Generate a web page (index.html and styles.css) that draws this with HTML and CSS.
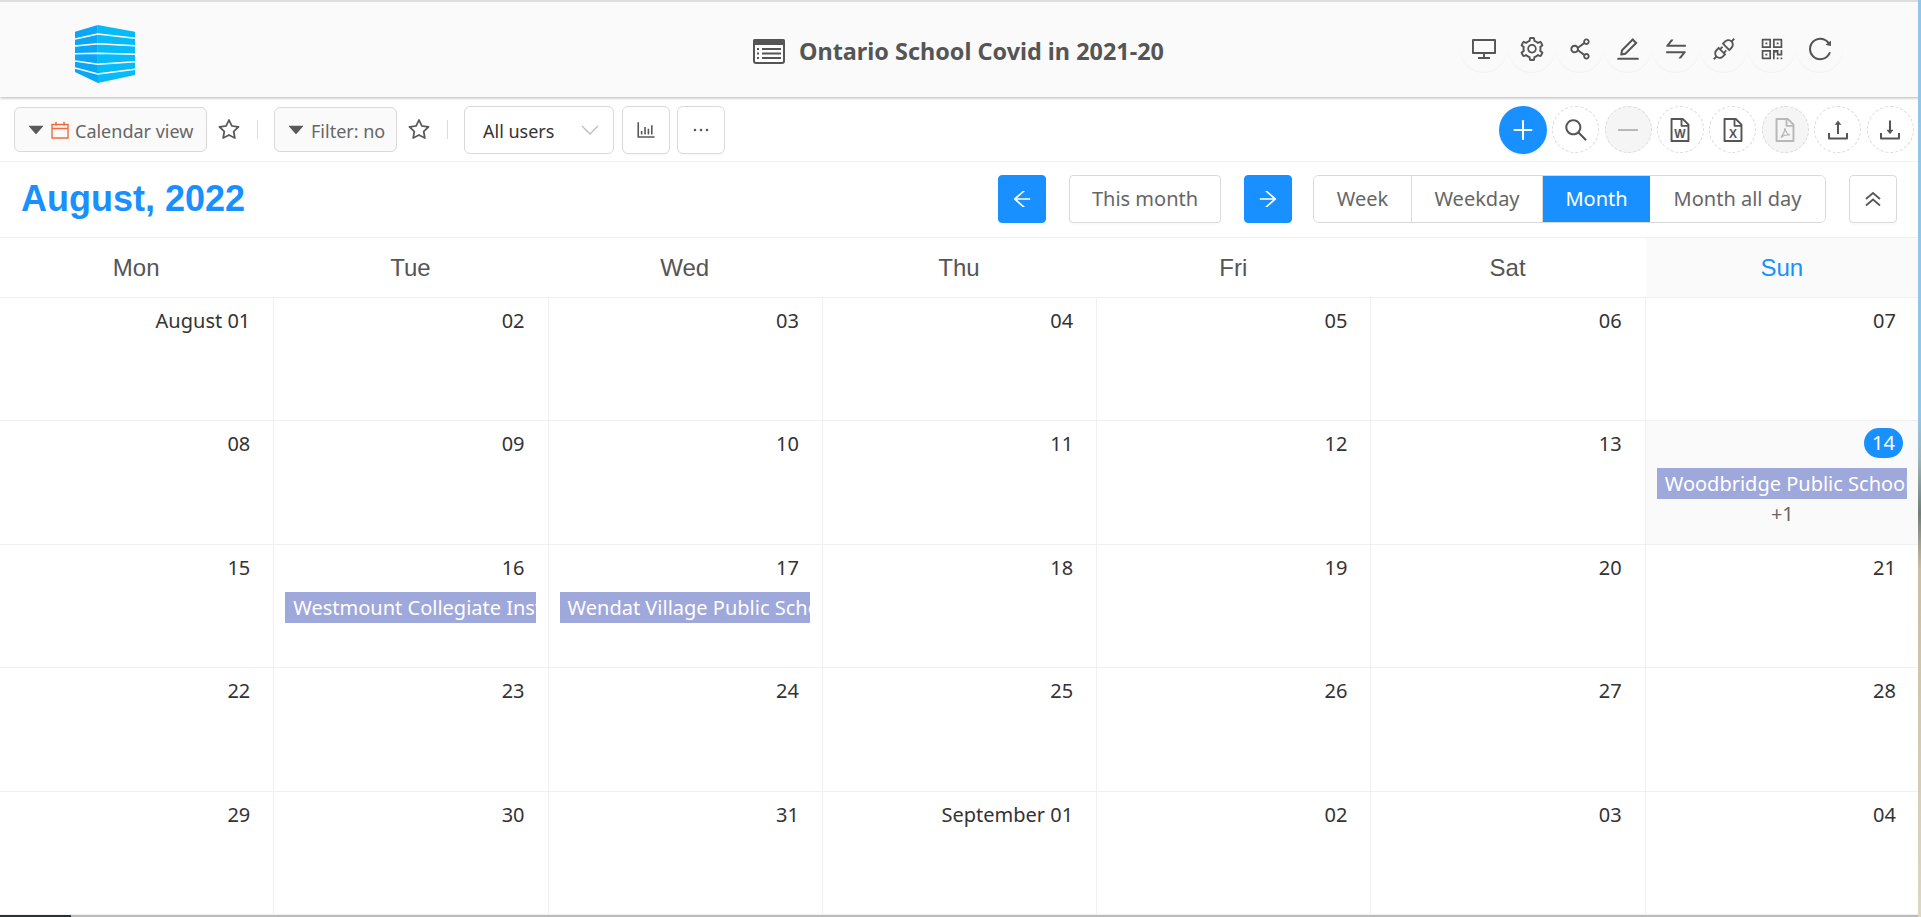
FILE: index.html
```html
<!DOCTYPE html>
<html lang="en">
<head>
<meta charset="utf-8">
<title>Ontario School Covid in 2021-20</title>
<link rel="stylesheet" href="styles.css">
</head>
<body>
<svg class="defs" xmlns="http://www.w3.org/2000/svg">
<symbol id="i-star" viewBox="64 64 896 896"><path d="M908.1 353.1l-253.9-36.9L540.7 86.1c-3.1-6.3-8.2-11.4-14.5-14.5-15.8-7.8-35-1.3-42.9 14.5L369.8 316.2l-253.9 36.9c-7 1-13.4 4.3-18.3 9.3a32.05 32.05 0 0 0 .6 45.3l183.7 179.1-43.4 252.9a31.95 31.95 0 0 0 46.4 33.7L512 754l227.1 119.4c6.2 3.3 13.4 4.4 20.3 3.2 17.4-3 29.1-19.5 26.1-36.9l-43.4-252.9 183.7-179.1c5-4.9 8.3-11.3 9.3-18.3 2.7-17.5-9.5-33.7-27-36.3zM664.8 561.6l36.1 210.3L512 672.7 323.1 772l36.1-210.3-152.8-149L417.6 382 512 190.7 606.4 382l211.2 30.7-152.8 148.9z"/></symbol>
<symbol id="i-caret" viewBox="64 64 896 896"><path d="M840.4 300H183.6c-19.7 0-30.7 20.8-18.5 35l328.4 380.8c9.4 10.9 27.5 10.9 37 0L858.9 335c12.2-14.2 1.2-35-18.5-35z"/></symbol>
<symbol id="i-desktop" viewBox="64 64 896 896"><path d="M928 140H96c-17.7 0-32 14.3-32 32v496c0 17.7 14.3 32 32 32h380v112H304c-8.8 0-16 7.2-16 16v48c0 4.4 3.6 8 8 8h432c4.4 0 8-3.6 8-8v-48c0-8.8-7.2-16-16-16H548V700h380c17.7 0 32-14.3 32-32V172c0-17.7-14.3-32-32-32zm-40 488H136V212h752v416z"/></symbol>
<symbol id="i-setting" viewBox="64 64 896 896"><path d="M924.8 625.7l-65.5-56c3.1-19 4.7-38.4 4.7-57.8s-1.6-38.8-4.7-57.8l65.5-56a32.03 32.03 0 0 0 9.3-35.2l-.9-2.6a443.74 443.74 0 0 0-79.7-137.9l-1.8-2.1a32.12 32.12 0 0 0-35.1-9.5l-81.3 28.9c-30-24.6-63.5-44-99.7-57.6l-15.7-85a32.05 32.05 0 0 0-25.8-25.7l-2.7-.5c-52.1-9.4-106.9-9.4-159 0l-2.7.5a32.05 32.05 0 0 0-25.8 25.7l-15.8 85.4a351.86 351.86 0 0 0-99 57.4l-81.9-29.1a32 32 0 0 0-35.1 9.5l-1.8 2.1a446.02 446.02 0 0 0-79.7 137.9l-.9 2.6c-4.5 12.5-.8 26.5 9.3 35.2l66.3 56.6c-3.1 18.8-4.6 38-4.6 57.1 0 19.2 1.5 38.4 4.6 57.1L99 625.5a32.03 32.03 0 0 0-9.3 35.2l.9 2.6c18.1 50.4 44.9 96.9 79.7 137.9l1.8 2.1a32.12 32.12 0 0 0 35.1 9.5l81.9-29.1c29.8 24.5 63.1 43.9 99 57.4l15.8 85.4a32.05 32.05 0 0 0 25.8 25.7l2.7.5a449.4 449.4 0 0 0 159 0l2.7-.5a32.05 32.05 0 0 0 25.8-25.7l15.7-85a350 350 0 0 0 99.7-57.6l81.3 28.9a32 32 0 0 0 35.1-9.5l1.8-2.1c34.8-41.1 61.6-87.5 79.7-137.9l.9-2.6c4.5-12.3.8-26.3-9.3-35zM788.3 465.9c2.5 15.1 3.8 30.6 3.8 46.1s-1.3 31-3.8 46.1l-6.6 40.1 74.7 63.9a370.03 370.03 0 0 1-42.6 73.6L721 702.8l-31.4 25.8c-23.9 19.6-50.5 35-79.3 45.8l-38.1 14.3-17.9 97a377.5 377.5 0 0 1-85 0l-17.9-97.2-37.8-14.5c-28.5-10.8-55-26.2-78.7-45.7l-31.4-25.9-93.4 33.2c-17-22.9-31.2-47.6-42.6-73.6l75.5-64.5-6.5-40c-2.4-14.9-3.7-30.3-3.7-45.5 0-15.3 1.2-30.6 3.7-45.5l6.5-40-75.5-64.5c11.3-26.1 25.6-50.7 42.6-73.6l93.4 33.2 31.4-25.9c23.7-19.5 50.2-34.9 78.7-45.7l37.9-14.3 17.9-97.2c28.1-3.2 56.8-3.2 85 0l17.9 97 38.1 14.3c28.7 10.8 55.4 26.2 79.3 45.8l31.4 25.8 92.8-32.9c17 22.9 31.2 47.6 42.6 73.6L781.8 426l6.5 39.9zM512 326c-97.2 0-176 78.8-176 176s78.8 176 176 176 176-78.8 176-176-78.8-176-176-176zm79.2 255.2A111.6 111.6 0 0 1 512 614c-29.9 0-58-11.7-79.2-32.8A111.6 111.6 0 0 1 400 502c0-29.9 11.7-58 32.8-79.2C454 401.6 482.1 390 512 390c29.9 0 58 11.6 79.2 32.8A111.6 111.6 0 0 1 624 502c0 29.9-11.7 58-32.8 79.2z"/></symbol>
<symbol id="i-share" viewBox="64 64 896 896"><path d="M752 664c-28.5 0-54.8 10-75.4 26.7L469.4 540.8a160.68 160.68 0 0 0 0-57.6l207.2-149.9C697.2 350 723.5 360 752 360c66.2 0 120-53.8 120-120s-53.8-120-120-120-120 53.8-120 120c0 11.6 1.6 22.7 4.7 33.3L439.9 415.8C410.7 377.1 364.3 352 312 352c-88.4 0-160 71.6-160 160s71.6 160 160 160c52.3 0 98.7-25.1 127.9-63.8l196.8 142.5c-3.1 10.6-4.7 21.8-4.7 33.3 0 66.2 53.8 120 120 120s120-53.8 120-120-53.8-120-120-120zm0-476c28.7 0 52 23.3 52 52s-23.3 52-52 52-52-23.3-52-52 23.3-52 52-52zM312 600c-48.5 0-88-39.5-88-88s39.5-88 88-88 88 39.5 88 88-39.5 88-88 88zm440 236c-28.7 0-52-23.3-52-52s23.3-52 52-52 52 23.3 52 52-23.3 52-52 52z"/></symbol>
<symbol id="i-edit" viewBox="64 64 896 896"><path d="M257.7 752c2 0 4-.2 6-.5L431.9 722c2-.4 3.9-1.3 5.3-2.8l423.9-423.9a9.96 9.96 0 0 0 0-14.1L694.9 114.9c-1.9-1.9-4.4-2.9-7.1-2.9s-5.2 1-7.1 2.9L256.8 538.8c-1.5 1.5-2.4 3.3-2.8 5.3l-29.5 168.2a33.5 33.5 0 0 0 9.4 29.8c6.6 6.4 14.9 9.9 23.8 9.9zm67.4-174.4L687.8 215l73.3 73.3-362.7 362.6-88.9 15.7 15.6-89zM880 836H144c-17.7 0-32 14.3-32 32v36c0 4.4 3.6 8 8 8h784c4.4 0 8-3.6 8-8v-36c0-17.7-14.3-32-32-32z"/></symbol>
<symbol id="i-swap" viewBox="64 64 896 896"><path d="M847.9 592H152c-4.4 0-8 3.6-8 8v60c0 4.4 3.6 8 8 8h605.2L612.9 851c-4.1 5.2-.4 13 6.3 13h72.5c4.9 0 9.5-2.2 12.6-6.1l168.8-214.1c16.5-21 1.6-51.8-25.2-51.8zM872 356H266.8l144.3-183c4.1-5.2.4-13-6.3-13h-72.5c-4.9 0-9.5 2.2-12.6 6.1L150.9 380.2c-16.5 21-1.6 51.8 25.1 51.8h696c4.4 0 8-3.6 8-8v-60c0-4.4-3.6-8-8-8z"/></symbol>
<symbol id="i-api" viewBox="64 64 896 896"><path d="M917.7 148.8l-42.4-42.4c-1.6-1.6-3.6-2.3-5.7-2.3s-4.1.8-5.7 2.3l-76.1 76.1a199.27 199.27 0 0 0-112.1-34.3c-51.2 0-102.4 19.5-141.5 58.6L432.3 308.7a8.03 8.03 0 0 0 0 11.3L704 591.7c1.6 1.6 3.6 2.3 5.7 2.3 2 0 4.1-.8 5.7-2.3l101.9-101.9c68.9-69 77-175.7 24.3-253.5l76.1-76.1c3.1-3.2 3.1-8.3 0-11.4zM769.1 441.7l-59.4 59.4-186.8-186.8 59.4-59.4c24.9-24.9 58.1-38.7 93.4-38.7 35.3 0 68.4 13.7 93.4 38.7 24.9 24.9 38.7 58.1 38.7 93.4 0 35.3-13.8 68.4-38.7 93.4zm-190.2 105a8.03 8.03 0 0 0-11.3 0L501 613.3 410.7 523l66.7-66.7c3.1-3.1 3.1-8.2 0-11.3L441 408.6a8.03 8.03 0 0 0-11.3 0L363 475.3l-43-43a7.85 7.85 0 0 0-5.7-2.3c-2 0-4.1.8-5.7 2.3L206.8 534.2c-68.9 69-77 175.7-24.3 253.5l-76.1 76.1a8.03 8.03 0 0 0 0 11.3l42.4 42.4c1.6 1.6 3.6 2.3 5.7 2.3s4.1-.8 5.7-2.3l76.1-76.1c33.7 22.9 72.9 34.3 112.1 34.3 51.2 0 102.4-19.5 141.5-58.6l101.9-101.9c3.1-3.1 3.1-8.2 0-11.3l-43-43 66.7-66.7c3.1-3.1 3.1-8.2 0-11.3l-36.6-36.2zM441.7 769.1a131.32 131.32 0 0 1-93.4 38.7c-35.3 0-68.4-13.7-93.4-38.7a131.32 131.32 0 0 1-38.7-93.4c0-35.3 13.7-68.4 38.7-93.4l59.4-59.4 186.8 186.8-59.4 59.4z"/></symbol>
<symbol id="i-qr" viewBox="64 64 896 896"><path d="M468 128H160c-17.7 0-32 14.3-32 32v308c0 4.4 3.6 8 8 8h332c4.4 0 8-3.6 8-8V136c0-4.4-3.6-8-8-8zm-56 284H192V192h220v220zm-138-74h56c4.4 0 8-3.6 8-8v-56c0-4.4-3.6-8-8-8h-56c-4.4 0-8 3.6-8 8v56c0 4.4 3.6 8 8 8zm194 210H136c-4.4 0-8 3.6-8 8v308c0 17.7 14.3 32 32 32h308c4.4 0 8-3.6 8-8V556c0-4.4-3.6-8-8-8zm-56 284H192V612h220v220zm-138-74h56c4.4 0 8-3.6 8-8v-56c0-4.4-3.6-8-8-8h-56c-4.4 0-8 3.6-8 8v56c0 4.4 3.6 8 8 8zm590-630H556c-4.4 0-8 3.6-8 8v332c0 4.4 3.6 8 8 8h332c4.4 0 8-3.6 8-8V160c0-17.7-14.3-32-32-32zm-32 284H612V192h220v220zm-138-74h56c4.4 0 8-3.6 8-8v-56c0-4.4-3.6-8-8-8h-56c-4.4 0-8 3.6-8 8v56c0 4.4 3.6 8 8 8zm194 210h-48c-4.4 0-8 3.6-8 8v134h-78V556c0-4.4-3.6-8-8-8H556c-4.4 0-8 3.6-8 8v332c0 4.4 3.6 8 8 8h48c4.4 0 8-3.6 8-8V644h78v102c0 4.4 3.6 8 8 8h190c4.4 0 8-3.6 8-8V556c0-4.4-3.6-8-8-8zM746 832h-48c-4.4 0-8 3.6-8 8v48c0 4.4 3.6 8 8 8h48c4.4 0 8-3.6 8-8v-48c0-4.4-3.6-8-8-8zm142 0h-48c-4.4 0-8 3.6-8 8v48c0 4.4 3.6 8 8 8h48c4.4 0 8-3.6 8-8v-48c0-4.4-3.6-8-8-8z"/></symbol>
<symbol id="i-reload" viewBox="64 64 896 896"><path d="M909.1 209.3l-56.4 44.1C775.8 155.1 656.2 92 521.9 92 290 92 102.3 279.5 102 511.5 101.7 743.7 289.8 932 521.9 932c181.3 0 335.8-115 394.6-276.1 1.5-4.2-.7-8.9-4.9-10.3l-56.7-19.5a8 8 0 0 0-10.1 4.8c-1.8 5-3.8 10-5.9 14.9-17.3 41-42.1 77.8-73.7 109.4A344.77 344.77 0 0 1 655.9 829c-42.3 17.9-87.4 27-133.8 27-46.5 0-91.5-9.1-133.8-27A341.5 341.5 0 0 1 279 755.2a342.16 342.16 0 0 1-73.7-109.4c-17.9-42.4-27-87.4-27-133.9s9.1-91.5 27-133.9c17.3-41 42.1-77.8 73.7-109.4 31.6-31.6 68.4-56.4 109.3-73.8 42.3-17.9 87.4-27 133.8-27 46.5 0 91.5 9.1 133.8 27a341.5 341.5 0 0 1 109.3 73.8c9.9 9.9 19.2 20.4 27.8 31.4l-60.2 47a8 8 0 0 0 3 14.1l175.6 43c5 1.2 9.9-2.6 9.9-7.7l.8-180.9c-.1-6.6-7.8-10.3-13-6.2z"/></symbol>
<symbol id="i-search" viewBox="64 64 896 896"><path d="M909.6 854.5L649.9 594.8C690.2 542.7 712 479 712 412c0-80.2-31.3-155.4-87.9-212.1-56.6-56.7-132-87.9-212.1-87.9s-155.5 31.3-212.1 87.9C143.2 256.5 112 331.8 112 412c0 80.1 31.3 155.5 87.9 212.1C256.5 680.8 331.8 712 412 712c67 0 130.6-21.8 182.7-62l259.7 259.6a8.2 8.2 0 0 0 11.6 0l43.6-43.5a8.2 8.2 0 0 0 0-11.6zM570.4 570.4C528 612.7 471.8 636 412 636s-116-23.3-158.4-65.6C211.3 528 188 471.8 188 412s23.3-116.1 65.6-158.4C296 211.3 352.2 188 412 188s116.1 23.2 158.4 65.6S636 352.2 636 412s-23.3 116.1-65.6 158.4z"/></symbol>
<symbol id="i-plus" viewBox="64 64 896 896"><path d="M482 152h60q8 0 8 8v704q0 8-8 8h-60q-8 0-8-8V160q0-8 8-8z"/><path d="M176 474h672q8 0 8 8v60q0 8-8 8H176q-8 0-8-8v-60q0-8 8-8z"/></symbol>
<symbol id="i-minus" viewBox="64 64 896 896"><path d="M872 474H152c-4.4 0-8 3.6-8 8v60c0 4.4 3.6 8 8 8h720c4.4 0 8-3.6 8-8v-60c0-4.4-3.6-8-8-8z"/></symbol>
<symbol id="i-file" viewBox="64 64 896 896"><path d="M854.6 288.6L639.4 73.4c-6-6-14.1-9.4-22.6-9.4H192c-17.7 0-32 14.3-32 32v832c0 17.7 14.3 32 32 32h640c17.7 0 32-14.3 32-32V311.3c0-8.5-3.4-16.7-9.4-22.7zM790.2 326H602V137.8L790.2 326zm1.8 562H232V136h302v216a42 42 0 0 0 42 42h216v494z"/></symbol>
<symbol id="i-upload" viewBox="64 64 896 896"><path d="M400 317.7h73.9V656c0 4.4 3.6 8 8 8h60c4.4 0 8-3.6 8-8V317.7H624c6.7 0 10.4-7.7 6.3-12.9L518.3 163a8 8 0 0 0-12.6 0l-112 141.7c-4.1 5.3-.4 13 6.3 13zM878 626h-60c-4.4 0-8 3.6-8 8v154H214V634c0-4.4-3.6-8-8-8h-60c-4.4 0-8 3.6-8 8v198c0 17.7 14.3 32 32 32h684c17.7 0 32-14.3 32-32V634c0-4.4-3.6-8-8-8z"/></symbol>
<symbol id="i-download" viewBox="64 64 896 896"><path d="M505.7 661a8 8 0 0 0 12.6 0l112-141.7c4.1-5.2.4-12.9-6.3-12.9h-74.1V168c0-4.4-3.6-8-8-8h-60c-4.4 0-8 3.6-8 8v338.3H400c-6.7 0-10.4 7.7-6.3 12.9l112 141.8zM878 626h-60c-4.4 0-8 3.6-8 8v154H214V634c0-4.4-3.6-8-8-8h-60c-4.4 0-8 3.6-8 8v198c0 17.7 14.3 32 32 32h684c17.7 0 32-14.3 32-32V634c0-4.4-3.6-8-8-8z"/></symbol>
<symbol id="i-left" viewBox="64 64 896 896"><path d="M872 474H286.9l350.2-304c5.6-4.9 2.2-14-5.2-14h-88.5c-3.9 0-7.6 1.4-10.5 3.9L155 487.8a31.96 31.96 0 0 0 0 48.3L535.1 866c1.5 1.3 3.3 2 5.2 2h91.5c7.4 0 10.8-9.2 5.2-14L286.9 550H872c4.4 0 8-3.6 8-8v-60c0-4.4-3.6-8-8-8z"/></symbol>
<symbol id="i-right" viewBox="64 64 896 896"><path d="M869 487.8L491.2 159.9c-2.9-2.5-6.6-3.9-10.5-3.9h-88.5c-7.4 0-10.8 9.2-5.2 14l350.2 304H152c-4.4 0-8 3.6-8 8v60c0 4.4 3.6 8 8 8h585.1L386.9 854c-5.6 4.9-2.2 14 5.2 14h91.5c1.9 0 3.8-.7 5.2-2L869 536.2a32.07 32.07 0 0 0 0-48.4z"/></symbol>
<symbol id="i-chart" viewBox="64 64 896 896"><path d="M888 792H200V168c0-4.4-3.6-8-8-8h-56c-4.4 0-8 3.6-8 8v688c0 4.4 3.6 8 8 8h752c4.4 0 8-3.6 8-8v-56c0-4.4-3.6-8-8-8zm-600-80h56c4.4 0 8-3.6 8-8V560c0-4.4-3.6-8-8-8h-56c-4.4 0-8 3.6-8 8v144c0 4.4 3.6 8 8 8zm152 0h56c4.4 0 8-3.6 8-8V384c0-4.4-3.6-8-8-8h-56c-4.4 0-8 3.6-8 8v320c0 4.4 3.6 8 8 8zm152 0h56c4.4 0 8-3.6 8-8V462c0-4.4-3.6-8-8-8h-56c-4.4 0-8 3.6-8 8v242c0 4.4 3.6 8 8 8zm152 0h56c4.4 0 8-3.6 8-8V304c0-4.4-3.6-8-8-8h-56c-4.4 0-8 3.6-8 8v400c0 4.4 3.6 8 8 8z"/></symbol>
</svg>

<header class="app-header">
  <div class="brand">
    <svg class="logo" viewBox="75 25 60 58" width="60" height="58">
      <polygon class="logo-left" points="75,31.7 97.7,25 98,83 75,72"/>
      <polygon class="logo-right" points="97.7,25 135,31.7 135,75 98,83"/>
      <g class="logo-lines">
        <polyline points="75,39 97.7,34 135,38.3"/>
        <polyline points="75,46 97.7,43.7 135,45.7"/>
        <polyline points="75,53.7 97.7,53.3 135,54.3"/>
        <polyline points="75,61 97.7,64.3 135,61.7"/>
        <polyline points="75,68 97.7,74 135,69.3"/>
      </g>
    </svg>
  </div>
  <div class="app-title">
    <svg class="title-icon" viewBox="0 0 32 25" width="32" height="25">
      <rect class="ti-frame" x="1" y="1" width="30" height="23" rx="2"/>
      <rect class="ti-bar" x="0" y="0" width="32" height="6" rx="2"/>
      <path class="ti-lines" d="M9 10h19M9 14.5h19M9 19h19M4 10h2M4 14.5h2M4 19h2"/>
    </svg>
    <span>Ontario School Covid in 2021-20</span>
  </div>
  <div class="header-tools">
    <button class="tool"><svg class="ic"><use href="#i-desktop"/></svg></button>
    <button class="tool"><svg class="ic"><use href="#i-setting"/></svg></button>
    <button class="tool"><svg class="ic"><use href="#i-share"/></svg></button>
    <button class="tool"><svg class="ic"><use href="#i-edit"/></svg></button>
    <button class="tool"><svg class="ic"><use href="#i-swap"/></svg></button>
    <button class="tool"><svg class="ic"><use href="#i-api"/></svg></button>
    <button class="tool"><svg class="ic"><use href="#i-qr"/></svg></button>
    <button class="tool"><svg class="ic"><use href="#i-reload"/></svg></button>
  </div>
</header>

<section class="toolbar">
  <button class="dropdown dropdown-view">
    <svg class="caret"><use href="#i-caret"/></svg>
    <svg class="cal-icon" viewBox="0 0 18 18" width="18" height="18"><path d="M1 3.5h16v13.5H1zM1 7.5h16M5 .8v4M13 .8v4"/></svg>
    <span class="tb-text">Calendar view</span>
  </button>
  <svg class="star"><use href="#i-star"/></svg>
  <i class="divider"></i>
  <button class="dropdown dropdown-filter">
    <svg class="caret"><use href="#i-caret"/></svg>
    <span class="tb-text">Filter: no</span>
  </button>
  <svg class="star"><use href="#i-star"/></svg>
  <i class="divider"></i>
  <div class="select">
    <span class="tb-text">All users</span>
    <svg class="chev" viewBox="0 0 18 10" width="18" height="10"><path d="M1 1l8 8 8-8"/></svg>
  </div>
  <button class="square chart"><svg class="ic-sm"><use href="#i-chart"/></svg></button>
  <button class="square more"><svg viewBox="0 0 18 4" width="18" height="4" class="dots"><circle cx="3" cy="2" r="1.3"/><circle cx="9" cy="2" r="1.3"/><circle cx="15" cy="2" r="1.3"/></svg></button>
  <div class="round-tools">
    <button class="round primary"><svg class="ic"><use href="#i-plus"/></svg></button>
    <button class="round"><svg class="ic"><use href="#i-search"/></svg></button>
    <button class="round off"><svg class="ic"><use href="#i-minus"/></svg></button>
    <button class="round"><svg class="ic file"><use href="#i-file"/><text x="12" y="19.500" class="file-letter">W</text></svg></button>
    <button class="round"><svg class="ic file"><use href="#i-file"/><text x="12" y="19.500" class="file-letter">X</text></svg></button>
    <button class="round off"><svg class="ic file"><use href="#i-file"/><path class="pdf-mark" d="M12 10c.6 4 2 6 5 7-3-.3-7 .5-9 2.500 1.500-2 3.800-5 4-9.500z"/></svg></button>
    <button class="round"><svg class="ic"><use href="#i-upload"/></svg></button>
    <button class="round"><svg class="ic"><use href="#i-download"/></svg></button>
  </div>
</section>

<section class="cal-nav">
  <h1 class="month-title">August, 2022</h1>
  <button class="nav-btn nav-arrow"><svg class="ic-sm"><use href="#i-left"/></svg></button>
  <button class="nav-btn this-month">This month</button>
  <button class="nav-btn nav-arrow next"><svg class="ic-sm"><use href="#i-right"/></svg></button>
  <div class="views">
    <button class="view view-week">Week</button>
    <button class="view view-weekday">Weekday</button>
    <button class="view view-month active">Month</button>
    <button class="view view-all">Month all day</button>
  </div>
  <button class="nav-btn collapse"><svg viewBox="0 0 18 16" width="18" height="16" class="dbl"><path d="M2 8l7-6 7 6M2 14.500l7-6 7 6"/></svg></button>
</section>

<section class="week-head">
  <div class="wd">Mon</div><div class="wd">Tue</div><div class="wd">Wed</div><div class="wd">Thu</div><div class="wd">Fri</div><div class="wd">Sat</div><div class="wd today-col">Sun</div>
</section>

<section class="month-grid">
  <div class="day"><div class="num">August 01</div></div>
  <div class="day"><div class="num">02</div></div>
  <div class="day"><div class="num">03</div></div>
  <div class="day"><div class="num">04</div></div>
  <div class="day"><div class="num">05</div></div>
  <div class="day"><div class="num">06</div></div>
  <div class="day"><div class="num">07</div></div>

  <div class="day"><div class="num">08</div></div>
  <div class="day"><div class="num">09</div></div>
  <div class="day"><div class="num">10</div></div>
  <div class="day"><div class="num">11</div></div>
  <div class="day"><div class="num">12</div></div>
  <div class="day"><div class="num">13</div></div>
  <div class="day today">
    <div class="num"><span class="badge">14</span></div>
    <div class="event">Woodbridge Public School</div>
    <div class="more-link">+1</div>
  </div>

  <div class="day"><div class="num">15</div></div>
  <div class="day"><div class="num">16</div><div class="event">Westmount Collegiate Institute</div></div>
  <div class="day"><div class="num">17</div><div class="event">Wendat Village Public School</div></div>
  <div class="day"><div class="num">18</div></div>
  <div class="day"><div class="num">19</div></div>
  <div class="day"><div class="num">20</div></div>
  <div class="day"><div class="num">21</div></div>

  <div class="day"><div class="num">22</div></div>
  <div class="day"><div class="num">23</div></div>
  <div class="day"><div class="num">24</div></div>
  <div class="day"><div class="num">25</div></div>
  <div class="day"><div class="num">26</div></div>
  <div class="day"><div class="num">27</div></div>
  <div class="day"><div class="num">28</div></div>

  <div class="day"><div class="num">29</div></div>
  <div class="day"><div class="num">30</div></div>
  <div class="day"><div class="num">31</div></div>
  <div class="day"><div class="num">September 01</div></div>
  <div class="day"><div class="num">02</div></div>
  <div class="day"><div class="num">03</div></div>
  <div class="day"><div class="num">04</div></div>
</section>

<div class="scrollbar"><i class="scroll-thumb"></i></div>
<div class="edge"></div>
</body>
</html>
```

FILE: styles.css
```css
* { box-sizing: border-box; }
html, body { margin: 0; padding: 0; }
body {
  width: 1921px;
  height: 917px;
  overflow: hidden;
  position: relative;
  display: flex;
  flex-direction: column;
  background: #fff;
  color: #595959;
  font-family: "Noto Sans", "Open Sans", sans-serif;
  font-size: 18px;
}
button { font: inherit; color: inherit; background: #fff; cursor: pointer; padding: 0; }
.defs { display: none; }
.ic { width: 24px; height: 24px; fill: currentColor; display: block; }
.ic-sm { width: 20px; height: 20px; fill: currentColor; display: block; }

/* header */
.app-header {
  flex: none;
  height: 97px;
  border-top: 2px solid #dedede;
  background: #fafafa;
  box-shadow: 0 1px 3px rgba(0,0,0,.3);
  display: flex;
  align-items: center;
  padding-right: 78px;
  position: relative;
  z-index: 2;
}
.brand { width: 753px; padding-left: 75px; display: flex; align-items: center; }
.logo { display: block; margin-top: 9px; }
.logo-left { fill: #0ca6f7; }
.logo-right { fill: #08bbf8; }
.logo-lines polyline { fill: none; stroke: #fff; stroke-width: 1.5; }
.app-title {
  display: flex;
  align-items: center;
  gap: 14px;
  font-size: 23.4px;
  font-weight: 700;
  color: #555;
  margin-top: 3px;
}
.title-icon { display: block; }
.ti-frame { fill: #fff; stroke: #555; stroke-width: 2; }
.ti-bar { fill: #555; }
.ti-lines { stroke: #555; stroke-width: 2; fill: none; }
.header-tools { margin-left: auto; margin-bottom: 2px; display: flex; gap: 1px; }
.tool {
  width: 47px;
  height: 47px;
  border: 0;
  border-radius: 50%;
  background: #fafafa;
  box-shadow: 0 1px 1px rgba(0,0,0,.035);
  display: flex;
  align-items: center;
  justify-content: center;
  color: #555;
}

/* toolbar */
.toolbar {
  flex: none;
  height: 65px;
  border-bottom: 1px solid #f0f0f0;
  display: flex;
  align-items: center;
  padding: 1px 7.5px 0 14px;
}
.tb-text { position: relative; top: 1px; }
.dropdown {
  height: 45px;
  border: 1px solid #d9d9d9;
  border-radius: 6px;
  background: #fafafa;
  display: flex;
  align-items: center;
  color: #666;
  padding-left: 12px;
}
.dropdown-view { width: 193px; }
.dropdown-filter { width: 123px; }
.caret { width: 18px; height: 18px; fill: #595959; margin-right: 6px; flex: none; }
.cal-icon { fill: none; stroke: #f4683c; stroke-width: 1.4; margin-right: 6px; }
.star { width: 22px; height: 22px; fill: #595959; margin-left: 11px; flex: none; }
.divider { width: 1px; height: 19px; background: #ddd; margin: 0 16px 0 17px; flex: none; }
.select {
  width: 150px;
  height: 48px;
  border: 1px solid #d9d9d9;
  border-radius: 6px;
  display: flex;
  align-items: center;
  justify-content: space-between;
  padding: 0 14px 0 18px;
  color: #333;
  margin-right: 8px;
}
.chev { fill: none; stroke: #bfbfbf; stroke-width: 1.4; }
.square {
  width: 48px;
  height: 48px;
  border: 1px solid #d9d9d9;
  border-radius: 6px;
  box-shadow: 0 2px 0 rgba(0,0,0,.015);
  display: flex;
  align-items: center;
  justify-content: center;
  color: #595959;
  margin-right: 7px;
}
.dots { fill: #595959; }
.round-tools { margin-left: auto; display: flex; align-items: center; gap: 5.4px; }
.round {
  width: 47px;
  height: 47px;
  border: 1px dashed #d9d9d9;
  border-radius: 50%;
  display: flex;
  align-items: center;
  justify-content: center;
  color: #555;
}
.round.primary {
  width: 48px;
  height: 48px;
  border: 0;
  background: #1890ff;
  color: #fff;
  box-shadow: 0 2px 0 rgba(0,0,0,.045);
}
.round.off { background: #f5f5f5; color: #b8b8b8; }
.file-letter { font-family: "Liberation Sans", sans-serif; font-size: 12px; font-weight: 700; text-anchor: middle; fill: currentColor; }
.pdf-mark { fill: none; stroke: currentColor; stroke-width: 1.2; }

/* calendar nav */
.cal-nav {
  flex: none;
  height: 76px;
  border-bottom: 1px solid #f0f0f0;
  display: flex;
  align-items: center;
  padding: 0 24px 2px 21px;
  font-size: 20px;
}
.month-title {
  margin: 0 auto 0 0;
  font-family: "Liberation Sans", Arial, sans-serif;
  font-size: 36px;
  font-weight: 700;
  color: #1890ff;
}
.nav-btn {
  height: 48px;
  border: 1px solid #d9d9d9;
  border-radius: 4px;
  display: flex;
  align-items: center;
  justify-content: center;
  color: #666;
  box-shadow: 0 2px 0 rgba(0,0,0,.015);
}
.nav-arrow { width: 48px; background: #1890ff; border-color: #1890ff; color: #fff; }
.this-month { width: 152px; margin: 0 23px; }
.next { margin-right: 21px; }
.views { display: flex; width: 513px; height: 48px; margin-right: 23px; border: 1px solid #d9d9d9; border-radius: 6px; overflow: hidden; }
.view { border: 0; border-right: 1px solid #d9d9d9; color: #666; background: #fff; }
.view-week { width: 98px; }
.view-weekday { width: 131px; }
.view-month { width: 107px; margin: -1px 0; }
.view-all { flex: 1; border-right: 0; }
.view.active { background: #1890ff; color: #fff; border-right: 0; }
.collapse { width: 48px; }
.dbl { fill: none; stroke: #595959; stroke-width: 1.8; }

/* week header */
.week-head {
  flex: none;
  width: 1920px;
  height: 60px;
  border-bottom: 1px solid #f0f0f0;
  display: grid;
  grid-template-columns: repeat(7, 1fr);
  font-family: "Liberation Sans", Arial, sans-serif;
  font-size: 24px;
  color: #555;
}
.wd { display: flex; align-items: center; justify-content: center; padding: 1px 2px 0 0; }
.today-col { color: #1890ff; background: #fafafa; }

/* month grid */
.month-grid {
  width: 1920px;
  flex: none;
  height: 617px;
  display: grid;
  grid-template-columns: repeat(7, minmax(0, 1fr));
  grid-template-rows: repeat(5, minmax(0, 1fr));
  font-size: 20px;
}
.day {
  border-right: 1px solid #f0f0f0;
  border-bottom: 1px solid #f0f0f0;
  padding-top: 7px;
  min-width: 0;
  overflow: hidden;
  color: #333;
}
.num { height: 30px; line-height: 32px; text-align: right; padding-right: 23px; }
.today { background: #fafafa; }
.today .num { line-height: 30px; }
.badge {
  display: inline-block;
  height: 30px;
  padding: 0 8px;
  margin-right: -7px;
  border-radius: 15px;
  background: #1890ff;
  color: #fff;
}
.event {
  margin: 10px 12px 0 11px;
  height: 31px;
  line-height: 31px;
  padding-left: 8px;
  background: #9fa8da;
  color: #fff;
  white-space: nowrap;
  overflow: hidden;
}
.more-link { height: 30px; line-height: 29px; text-align: center; color: #666; }

/* window edges from the capture */
.scrollbar { position: absolute; left: 0; bottom: 0; width: 100%; height: 2px; background: #bbb; }
.scroll-thumb { display: block; width: 71px; height: 2px; background: #263238; }
.edge {
  position: absolute;
  top: 0;
  right: 0;
  width: 3px;
  height: 100%;
  background: linear-gradient(#8fc6ea 0, #8fc6ea 45%, #9db5bb 50%, #6f7f78 56%, #c9bda2 62%, #dcd6c4 100%);
  z-index: 3;
}
```
